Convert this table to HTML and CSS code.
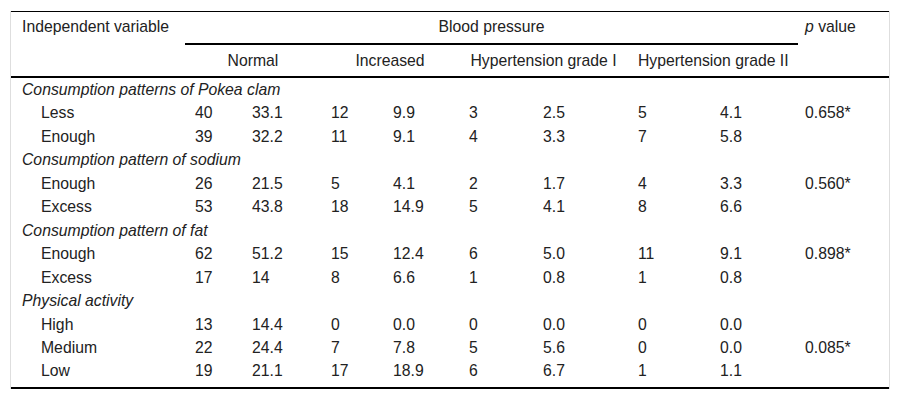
FILE: index.html
```html
<!DOCTYPE html>
<html lang="en">
<head>
<meta charset="utf-8">
<title>Blood pressure table</title>
<link rel="stylesheet" href="styles.css">
</head>
<body>
<div class="wrap">
<table class="tbl">
<colgroup>
<col class="c0"><col class="c1"><col class="c2"><col class="c3"><col class="c4"><col class="c5"><col class="c6"><col class="c7"><col class="c8"><col class="c9">
</colgroup>
<thead>
<tr>
<th class="hv" rowspan="2">Independent variable</th>
<th class="group" colspan="8">Blood pressure</th>
<th class="hv hp" rowspan="2"><i>p</i> value</th>
</tr>
<tr>
<th class="sub" colspan="2">Normal</th>
<th class="sub" colspan="2">Increased</th>
<th class="sub" colspan="2">Hypertension grade I</th>
<th class="sub" colspan="2">Hypertension grade II</th>
</tr>
</thead>
<tbody>
<tr class="cat"><td colspan="10">Consumption patterns of Pokea clam</td></tr>
<tr><td class="lab">Less</td><td>40</td><td>33.1</td><td>12</td><td>9.9</td><td>3</td><td>2.5</td><td>5</td><td>4.1</td><td class="pv">0.658*</td></tr>
<tr><td class="lab">Enough</td><td>39</td><td>32.2</td><td>11</td><td>9.1</td><td>4</td><td>3.3</td><td>7</td><td>5.8</td><td class="pv"></td></tr>
<tr class="cat"><td colspan="10">Consumption pattern of sodium</td></tr>
<tr><td class="lab">Enough</td><td>26</td><td>21.5</td><td>5</td><td>4.1</td><td>2</td><td>1.7</td><td>4</td><td>3.3</td><td class="pv">0.560*</td></tr>
<tr><td class="lab">Excess</td><td>53</td><td>43.8</td><td>18</td><td>14.9</td><td>5</td><td>4.1</td><td>8</td><td>6.6</td><td class="pv"></td></tr>
<tr class="cat"><td colspan="10">Consumption pattern of fat</td></tr>
<tr><td class="lab">Enough</td><td>62</td><td>51.2</td><td>15</td><td>12.4</td><td>6</td><td>5.0</td><td>11</td><td>9.1</td><td class="pv">0.898*</td></tr>
<tr><td class="lab">Excess</td><td>17</td><td>14</td><td>8</td><td>6.6</td><td>1</td><td>0.8</td><td>1</td><td>0.8</td><td class="pv"></td></tr>
<tr class="cat"><td colspan="10">Physical activity</td></tr>
<tr><td class="lab">High</td><td>13</td><td>14.4</td><td>0</td><td>0.0</td><td>0</td><td>0.0</td><td>0</td><td>0.0</td><td class="pv"></td></tr>
<tr><td class="lab">Medium</td><td>22</td><td>24.4</td><td>7</td><td>7.8</td><td>5</td><td>5.6</td><td>0</td><td>0.0</td><td class="pv">0.085*</td></tr>
<tr class="last"><td class="lab">Low</td><td>19</td><td>21.1</td><td>17</td><td>18.9</td><td>6</td><td>6.7</td><td>1</td><td>1.1</td><td class="pv"></td></tr>
</tbody>
</table>
</div>
</body>
</html>
```

FILE: styles.css
```css
html, body {
  margin: 0;
  padding: 0;
  background: #fff;
}

body {
  font-family: "Liberation Sans", Arial, sans-serif;
  font-size: 15.75px;
  color: #222;
}

.wrap {
  margin: 11px 0 0 10px;
  width: 878px;
  border-left: 1px solid #dedede;
  border-right: 1px solid #dedede;
}

.tbl {
  width: 878px;
  table-layout: fixed;
  border-collapse: separate;
  border-spacing: 0;
  border-top: 1px solid #000;
  border-bottom: 2px solid #000;
}

.c0 { width: 174px; }
.c1 { width: 57px; }
.c2 { width: 79px; }
.c3 { width: 62px; }
.c4 { width: 76px; }
.c5 { width: 74px; }
.c6 { width: 95px; }
.c7 { width: 82px; }
.c8 { width: 88px; }
.c9 { width: 91px; }

.tbl th {
  font-weight: normal;
  line-height: 20px;
  padding: 5px 10px 6px;
  text-align: left;
  vertical-align: top;
  white-space: nowrap;
}

.tbl th.hv {
  padding-left: 11px;
  border-bottom: 2px solid #000;
}

.tbl th.hp {
  padding-left: 7px;
}

.tbl th.group {
  text-align: center;
  border-bottom: 2px solid #000;
}

.tbl th.sub {
  text-align: center;
  padding: 6px 10px 5px;
  border-bottom: 2px solid #000;
}

.tbl td {
  padding: 0 10px;
  line-height: 23.45px;
  height: 23.45px;
  vertical-align: top;
  white-space: nowrap;
}

.tbl tr.cat td {
  font-style: italic;
  padding-left: 11px;
}

.tbl td.lab {
  padding-left: 30px;
}

.tbl td.pv {
  padding-left: 7px;
}

.tbl tr.last td {
  padding-bottom: 4px;
}
```
